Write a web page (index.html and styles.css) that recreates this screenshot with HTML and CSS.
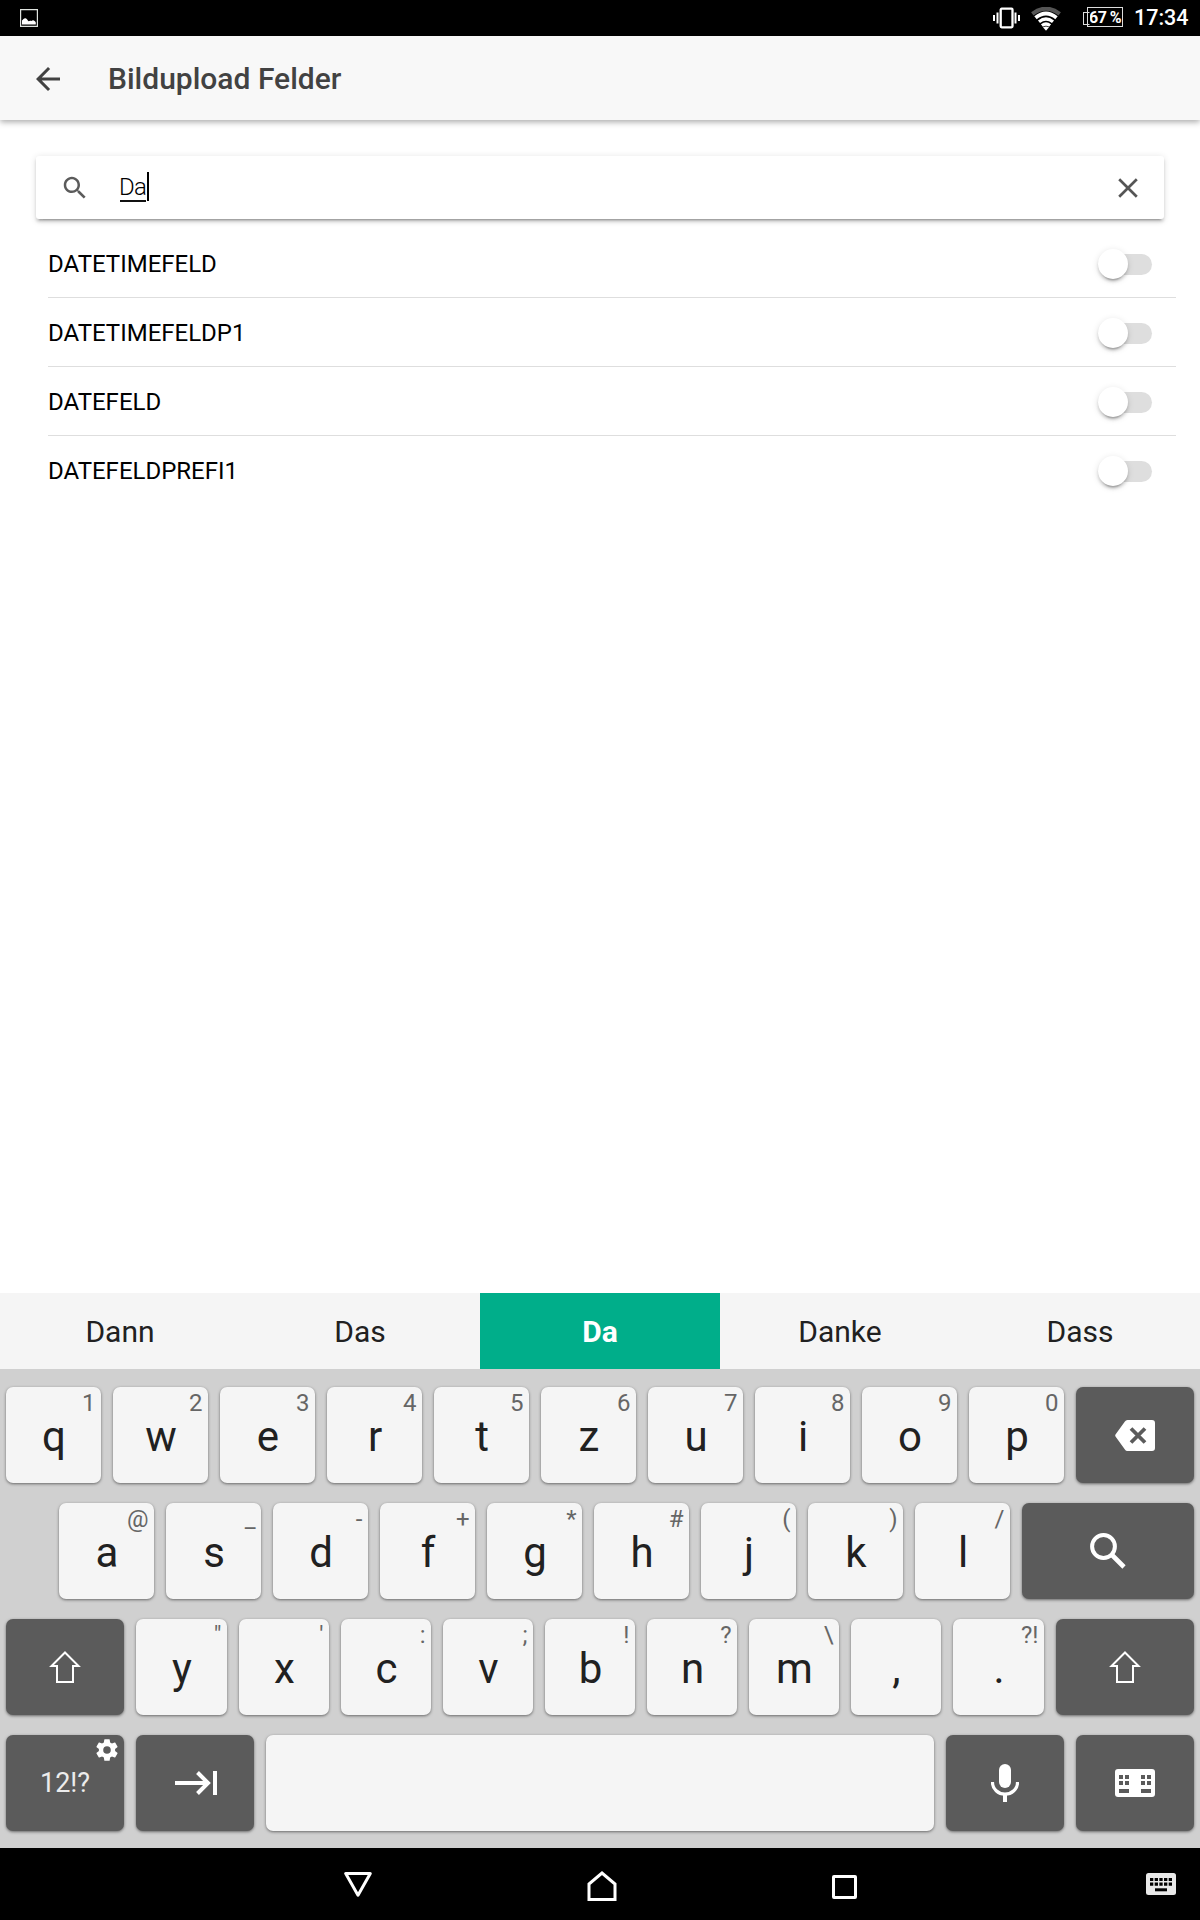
FILE: index.html
```html
<!DOCTYPE html>
<html lang="de">
<head>
<meta charset="utf-8">
<title>Bildupload Felder</title>
<link rel="stylesheet" href="styles.css">
</head>
<body>
<div class="statusbar">
  <svg class="status-picture" width="18" height="18" viewBox="0 0 18 18"><path d="M.6.6h16.8v16.8H.6z" fill="none" stroke="#dfe3df" stroke-width="1.2"/><path d="M2 15.5v-4c1.2-1.5 2-2.500 3.500-2.300C7 9.500 7.500 11.500 8.600 12.200c1-.7 2-.7 2.800-.2 1.800-1.600 3.500-.3 4.400 1.500v2z" fill="#fff"/></svg>
  <div class="status-right">
    <svg width="27" height="22" viewBox="0 0 27 22"><rect x="7.700" y="1.700" width="11.800" height="18.600" rx="1" fill="none" stroke="#fff" stroke-width="2.300"/><path d="M4.500 5.500v11M22.500 5.500v11" stroke="#fff" stroke-width="2"/><path d="M1 8v6M26 8v6" stroke="#fff" stroke-width="2"/></svg>
    <svg class="wifi" width="30" height="24" viewBox="0 0 30 24"><path d="M1.300 6.800Q15-3.500 28.700 6.800" fill="none" stroke="#555" stroke-width="4"/><path d="M4.500 10.700Q15 2.200 25.500 10.700" fill="none" stroke="#fff" stroke-width="3.800"/><path d="M8 14.800q7-5.500 14 0M10.900 18.500q4.100-3 8.200 0" fill="none" stroke="#fff" stroke-width="3.300"/><path d="M12 20.300q3-1.600 6 0L15 23.800z" fill="#fff"/></svg>
    <div class="battery">67 %</div>
    <div class="clock">17:34</div>
  </div>
</div>

<header class="toolbar">
  <svg width="36" height="36" viewBox="0 0 24 24" fill="#424242"><path d="M20 11H7.830l5.590-5.590L12 4l-8 8 8 8 1.410-1.410L7.830 13H20z"/></svg>
  <h1 class="toolbar-title">Bildupload Felder</h1>
</header>

<main class="content">
  <div class="searchbar">
    <svg class="search-icon" width="30" height="30" viewBox="0 0 24 24" fill="#5b5b5b"><path d="M15.500 14h-.790l-.280-.270C15.410 12.590 16 11.110 16 9.500 16 5.910 13.090 3 9.500 3S3 5.910 3 9.500 5.910 16 9.500 16c1.610 0 3.090-.590 4.230-1.570l.270.280v.790l5 4.990L20.490 19zm-6 0C7.010 14 5 11.990 5 9.500S7.010 5 9.500 5 14 7.010 14 9.500 11.990 14 9.500 14z"/></svg>
    <span class="query">Da</span><span class="caret"></span>
    <svg class="clear" width="20" height="20" viewBox="0 0 20 20"><path d="M1.200 1.200l17.600 17.600M18.800 1.200L1.200 18.800" stroke="#555" stroke-width="2.700"/></svg>
  </div>
  <ul class="list">
    <li class="item"><span>DATETIMEFELD</span><span class="toggle"></span></li>
    <li class="item"><span>DATETIMEFELDP1</span><span class="toggle"></span></li>
    <li class="item"><span>DATEFELD</span><span class="toggle"></span></li>
    <li class="item"><span>DATEFELDPREFI1</span><span class="toggle"></span></li>
  </ul>
</main>

<div class="suggestions">
  <div>Dann</div><div>Das</div><div class="chosen">Da</div><div>Danke</div><div>Dass</div>
</div>

<section class="keyboard">
  <div class="row row-top">
    <div class="key">q<span class="hint">1</span></div>
    <div class="key">w<span class="hint">2</span></div>
    <div class="key">e<span class="hint">3</span></div>
    <div class="key">r<span class="hint">4</span></div>
    <div class="key">t<span class="hint">5</span></div>
    <div class="key">z<span class="hint">6</span></div>
    <div class="key">u<span class="hint">7</span></div>
    <div class="key">i<span class="hint">8</span></div>
    <div class="key">o<span class="hint">9</span></div>
    <div class="key">p<span class="hint">0</span></div>
    <div class="key dark"><svg width="40" height="31" viewBox="0 0 40 31"><path d="M12.500 0H37q3 0 3 3v25q0 3-3 3H12.500q-1.700 0-2.600-1.500L.500 16.500q-.6-1 0-2L9.900 1.500Q10.800 0 12.500 0z" fill="#fff"/><path d="M16 8.500l14 14M30 8.500l-14 14" stroke="#5b5b5b" stroke-width="3.800"/></svg></div>
  </div>
  <div class="row row-home">
    <div class="key">a<span class="hint">@</span></div>
    <div class="key">s<span class="hint">_</span></div>
    <div class="key">d<span class="hint">-</span></div>
    <div class="key">f<span class="hint">+</span></div>
    <div class="key">g<span class="hint">*</span></div>
    <div class="key">h<span class="hint">#</span></div>
    <div class="key">j<span class="hint">(</span></div>
    <div class="key">k<span class="hint">)</span></div>
    <div class="key">l<span class="hint">/</span></div>
    <div class="key dark"><svg width="36" height="36" viewBox="0 0 36 36" fill="none" stroke="#fff"><circle cx="13.500" cy="13.500" r="11.400" stroke-width="4"/><path d="M22 22l12 12" stroke-width="4.600"/></svg></div>
  </div>
  <div class="row row-low">
    <div class="key dark"><svg width="32" height="32" viewBox="0 0 32 32"><path d="M16 1.500L29.500 15H24v16H8V15H2.500z" fill="none" stroke="#fff" stroke-width="2"/></svg></div>
    <div class="key">y<span class="hint">"</span></div>
    <div class="key">x<span class="hint">'</span></div>
    <div class="key">c<span class="hint">:</span></div>
    <div class="key">v<span class="hint">;</span></div>
    <div class="key">b<span class="hint">!</span></div>
    <div class="key">n<span class="hint">?</span></div>
    <div class="key">m<span class="hint">\</span></div>
    <div class="key">,</div>
    <div class="key">.<span class="hint">?!</span></div>
    <div class="key dark"><svg width="32" height="32" viewBox="0 0 32 32"><path d="M16 1.500L29.500 15H24v16H8V15H2.500z" fill="none" stroke="#fff" stroke-width="2"/></svg></div>
  </div>
  <div class="row row-space">
    <div class="key dark symbols">12!?<svg class="gear" width="26" height="26" viewBox="0 0 24 24" fill="#fff"><path d="M19.430 12.980c.040-.320.070-.640.070-.980s-.030-.660-.070-.980l2.110-1.650c.190-.150.240-.420.120-.640l-2-3.460c-.120-.220-.390-.300-.610-.220l-2.490 1c-.520-.400-1.080-.730-1.690-.980l-.380-2.650A.488.488 0 0 0 14 2h-4c-.250 0-.460.180-.490.420l-.380 2.650c-.610.250-1.170.590-1.690.980l-2.490-1c-.230-.090-.490 0-.610.220l-2 3.460c-.130.220-.070.490.120.640l2.110 1.650c-.040.320-.070.650-.070.980s.030.660.070.980l-2.110 1.650c-.190.150-.240.420-.120.640l2 3.460c.120.220.390.300.610.220l2.490-1c.520.400 1.080.730 1.690.980l.380 2.650c.030.240.240.420.490.420h4c.250 0 .460-.180.490-.420l.380-2.650c.610-.250 1.170-.590 1.690-.980l2.490 1c.230.090.490 0 .610-.220l2-3.460c.120-.220.070-.490-.120-.640zM12 15.500a3.500 3.500 0 1 1 0-7 3.500 3.500 0 0 1 0 7z"/></svg></div>
    <div class="key dark"><svg class="tab" width="42" height="24" viewBox="0 0 42 24" fill="none" stroke="#fff" stroke-width="4"><path d="M0 12h33M22.500 1.500L33 12 22.500 22.500M40 0v24"/></svg></div>
    <div class="key"></div>
    <div class="key dark"><svg width="28" height="38" viewBox="0 0 28 38"><rect x="8" width="12" height="24" rx="6" fill="#fff"/><path d="M1.500 18v.5a12.500 11.700 0 0 0 25 0V18" fill="none" stroke="#fff" stroke-width="3.200"/><path d="M12 31h4v7h-4z" fill="#fff"/></svg></div>
    <div class="key dark"><svg width="40" height="28" viewBox="0 0 40 28"><rect width="40" height="28" rx="3" fill="#fff"/><path d="M4 6h4v4H4zM10 6h4v4h-4zM26 6h4v4h-4zM32 6h4v4h-4zM4 12h4v4H4zM10 12h4v4h-4zM26 12h4v4h-4zM32 12h4v4h-4zM4 20h10v4H4zM26 20h10v4H26z" fill="#5b5b5b"/></svg></div>
  </div>
</section>

<nav class="navbar">
  <div class="nav-button"><svg width="28" height="25" viewBox="0 0 28 25"><path d="M1.700 1.500h24.600L14 23.200z" fill="none" stroke="#fff" stroke-width="3" stroke-linejoin="round"/></svg></div>
  <div class="nav-button nav-home"><svg width="30" height="30" viewBox="0 0 30 30"><path d="M2 28.500V13L15 2l13 11v15.500z" fill="none" stroke="#fff" stroke-width="3"/></svg></div>
  <div class="nav-button nav-recents"><svg width="25" height="24" viewBox="0 0 25 24"><rect x="1.500" y="1.500" width="22" height="21" rx=".5" fill="none" stroke="#fff" stroke-width="3"/></svg></div>
  <div class="nav-ime"><svg width="30" height="22" viewBox="0 0 30 22"><rect width="30" height="22" rx="2.500" fill="#e9e9e9"/><path d="M4 6.500h22M4 11.200h22" stroke="#000" stroke-width="3.200" stroke-dasharray="3.300 1.375"/><path d="M9 16.800h12" stroke="#000" stroke-width="3"/></svg></div>
</nav>
</body>
</html>
```
FILE: styles.css
```css
* { box-sizing: border-box; }
body {
  margin: 0;
  width: 1200px;
  height: 1920px;
  display: flex;
  flex-direction: column;
  overflow: hidden;
  background: #fff;
  font-family: Roboto, "Liberation Sans", sans-serif;
}
svg { display: block; flex: none; }

.statusbar {
  height: 36px;
  flex: none;
  display: flex;
  justify-content: space-between;
  align-items: center;
  padding: 0 12px 0 20px;
  background: #000;
  color: #fff;
}
.status-right { display: flex; align-items: center; height: 36px; }
.wifi { margin: 2px 0 0 11px; }
.battery {
  position: relative;
  width: 36px;
  height: 20px;
  margin: -2px 0 0 26px;
  border: 1px solid #ddd;
  font-size: 16px;
  font-weight: 700;
  line-height: 19px;
  text-align: center;
  letter-spacing: -.6px;
  white-space: nowrap;
}
.battery::before {
  content: "";
  position: absolute;
  left: -5px;
  top: 4px;
  width: 5px;
  height: 11px;
  border: 1px solid #ddd;
  border-right-color: #000;
}
.clock {
  margin-left: 11px;
  width: 54px;
  font-size: 21.5px;
  font-weight: 500;
  line-height: 38px;
  white-space: nowrap;
}

.toolbar {
  position: relative;
  height: 84px;
  flex: none;
  display: flex;
  align-items: center;
  gap: 42px;
  padding: 1px 0 0 30px;
  background: #f8f8f8;
  box-shadow: 0 2px 6px rgba(0, 0, 0, .34);
}
.toolbar-title { margin: 0; font-size: 30px; line-height: 83px; font-weight: 500; color: #424242; }

.content { flex: 1; padding-top: 36px; }
.searchbar {
  height: 63px;
  margin: 0 36px;
  padding: 0 26px 0 24px;
  display: flex;
  align-items: center;
  border-radius: 3px;
  background: #fff;
  box-shadow: 0 3px 3px rgba(0, 0, 0, .14), 0 4.5px 1.5px -3px rgba(0, 0, 0, .2), 0 1.5px 7.5px rgba(0, 0, 0, .12);
}
.query {
  width: 26px;
  height: 29px;
  margin: -1px 0 0 30px;
  border-bottom: 2px solid #111;
  font-size: 24px;
  font-weight: 300;
  line-height: 29px;
  letter-spacing: -.8px;
  text-indent: -1px;
  white-space: nowrap;
  color: #000;
}
.caret { width: 2px; height: 29px; margin: -2px 0 0 1px; background: #000; }
.clear { margin-left: auto; }

.list { list-style: none; margin: 10px 24px 0 48px; padding: 0; }
.item {
  height: 69px;
  display: flex;
  justify-content: space-between;
  align-items: center;
  padding: 2px 24px 0 0;
  border-bottom: 1px solid #dedede;
  font-size: 24px;
  color: #000;
}
.item:last-child { padding-top: 1px; border-bottom: 0; }
.toggle {
  position: relative;
  width: 54px;
  height: 21px;
  border-radius: 11px;
  background: #dedede;
}
.toggle::before {
  content: "";
  position: absolute;
  left: 0;
  top: -4.5px;
  width: 30px;
  height: 30px;
  border-radius: 50%;
  background: #fff;
  box-shadow: 0 3px 3px rgba(0, 0, 0, .14), 0 4.5px 1.5px -3px rgba(0, 0, 0, .2), 0 1.5px 7.5px rgba(0, 0, 0, .12);
}

.suggestions {
  flex: none;
  display: grid;
  grid-template-columns: repeat(5, 1fr);
  height: 76px;
  background: #f5f5f5;
  color: #212121;
  font-size: 30px;
  line-height: 77px;
  text-align: center;
}
.chosen { background: #00ae8a; color: #fff; font-weight: 700; }

.keyboard {
  flex: none;
  height: 479px;
  display: flex;
  flex-direction: column;
  gap: 20px;
  padding: 18px 6px 17px;
  background: #d0d0d0;
}
.row { display: grid; gap: 12px; height: 96px; }
.row-top { grid-template-columns: repeat(10, 95px) 118px; }
.row-home { grid-template-columns: repeat(9, 95px) 172px; padding-left: 53px; }
.row-low { grid-template-columns: 118px 91px repeat(7, 90px) 91px 138px; }
.row-space { grid-template-columns: 118px 118px 668px 118px 118px; }
.key {
  position: relative;
  height: 96px;
  padding-left: 1px;
  border-radius: 7px;
  background: #f5f5f5;
  color: #212121;
  font-size: 42px;
  line-height: 100px;
  text-align: center;
  box-shadow: 0 1px 3px rgba(0, 0, 0, .5);
}
.key.dark {
  display: flex;
  align-items: center;
  justify-content: center;
  padding-left: 0;
  background: #5b5b5b;
}
.hint {
  position: absolute;
  top: 0;
  right: 5.5px;
  font-size: 24px;
  line-height: 32px;
  color: #666;
}
.key.symbols { font-size: 27px; line-height: 96px; color: #ececec; }
.gear { position: absolute; right: 4px; top: 2px; }
.tab { margin-left: 1px; }

.navbar { height: 72px; flex: none; display: flex; padding-left: 236px; background: #000; }
.nav-button { width: 243px; display: flex; align-items: center; justify-content: center; }
.nav-home { padding: 4px 0 0 2px; }
.nav-recents { padding: 6px 0 0 1px; }
.nav-ime { margin-left: auto; width: 78px; display: flex; align-items: center; justify-content: center; }
```
